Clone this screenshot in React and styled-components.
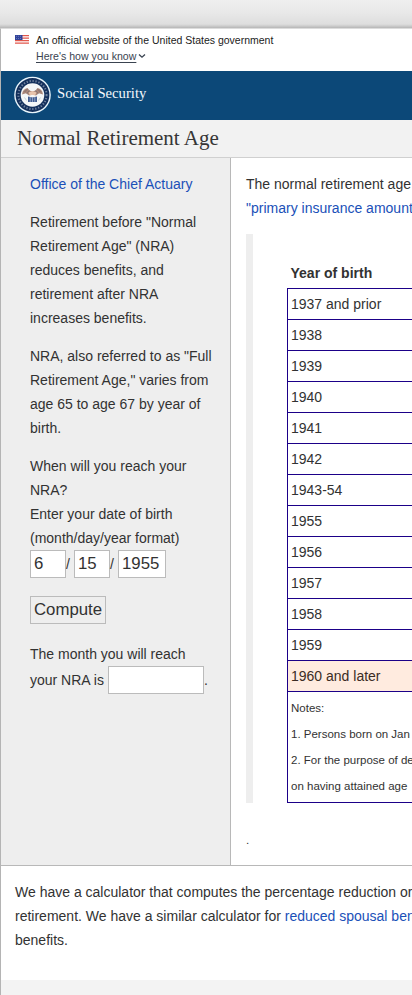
import React from 'react';
import styled, { createGlobalStyle } from 'styled-components';

const Global = createGlobalStyle`
  *, *::before, *::after { box-sizing: border-box; }
  html { overflow: hidden; }
  body {
    margin: 0;
    background: #dcdcdc;
    color: #323232;
    font: 14px/24px "Liberation Sans", Arial, sans-serif;
  }
`;

const Page = styled.div`
  width: 100%;
  height: 995px;
  padding-top: 28px;
  overflow: hidden;
  background: linear-gradient(#efefef 0, #e9e9e9 12px, #dedede 24px, #d6d6d6 25px, #b6b6b6 28px, #b6b6b6 100%);
`;

const Frame = styled.div`
  height: 967px;
  border-left: 1px solid #b4b4b4;
  border-top: 1px solid #dcdcdc;
  background: #fff;
  overflow: hidden;
`;

const GovBanner = styled.div`
  height: 42px;
  display: flex;
  gap: 7px;
  padding: 4px 0 0 14px;
  font-size: 10.5px;
  line-height: 15px;
  color: #1b1b1b;
  svg { display: block; }
`;

const FlagIcon = styled.svg`
  margin-top: 2px;
`;

const KnowLink = styled.a`
  display: flex;
  align-items: center;
  gap: 2px;
  color: #3a4350;
  font-size: 10.6px;
  line-height: 16px;
  span { text-decoration: underline; text-underline-offset: 1.5px; }
`;

const Masthead = styled.header`
  height: 49px;
  display: flex;
  align-items: center;
  gap: 6px;
  padding: 0 0 2px 13px;
  background: #0c4878;
  color: #f4f8fc;
  font: 14.7px/20px "Liberation Serif", "Times New Roman", serif;
`;

const SiteName = styled.span`
  padding-bottom: 3px;
`;

const TitleBar = styled.div`
  height: 38px;
  padding-left: 16px;
  background: #f2f2f2;
  border-bottom: 1px solid #d0d0d0;
`;

const Title = styled.h1`
  margin: 0;
  color: #363636;
  font: 400 21px/37px "Liberation Serif", "Times New Roman", serif;
`;

const Columns = styled.div`
  height: 708px;
  display: flex;
  border-bottom: 1px solid #b8b8b8;
`;

const Sidebar = styled.aside`
  width: 230px;
  flex: none;
  padding: 14px 14px 0 29px;
  background: #eee;
  border-right: 1px solid #b8b8b8;
`;

const Paragraph = styled.p`
  margin: 0 0 14px;
  white-space: nowrap;
`;

const Link = styled.a`
  color: #1a50b8;
`;

const DateRow = styled.div`
  display: flex;
  height: 28px;
  margin-top: -14px;
  line-height: 28px;
`;

const Field = styled.input`
  width: ${(p) => p.$width}px;
  height: 28px;
  padding: 0 3px;
  border: 1px solid #bbb;
  border-radius: 0;
  background: #fff;
  color: #323232;
  font: 16.8px "Liberation Sans", Arial, sans-serif;
  outline: none;
`;

const Slash = styled.span`
  width: 8px;
`;

const ComputeButton = styled.button`
  display: block;
  width: 76px;
  height: 28px;
  margin: 18px 0;
  padding: 0;
  border: 1px solid #bbb;
  background: #eee;
  color: #323232;
  font: 16.8px "Liberation Sans", Arial, sans-serif;
`;

const ResultRow = styled.div`
  display: flex;
  gap: 4px;
  line-height: 28px;
  white-space: nowrap;
`;

const ResultField = styled.span`
  display: flex;
`;

const Main = styled.main`
  flex: 1;
  min-width: 0;
  overflow: hidden;
  padding: 14px 0 0 15px;
`;

const TableQuote = styled.div`
  height: 569px;
  padding: 27px 0 0 34px;
  border-left: 7px solid #eee;
`;

const NraTable = styled.table`
  width: 600px;
  border-collapse: collapse;
  th {
    height: 27px;
    padding: 0 3px 3px;
    text-align: left;
    line-height: 24px;
  }
  td {
    border: 1px solid #1b0088;
    padding: 0 3px;
  }
`;

const YearCell = styled.td`
  height: 31px;
  background: ${(p) => (p.$marked ? '#ffebdf' : '#fff')};
  color: ${(p) => (p.$marked ? '#3b2c24' : 'inherit')};
`;

const NotesCell = styled.td`
  height: 111px;
  font-size: 11.5px;
  line-height: 26px;
  vertical-align: top;
  white-space: nowrap;
  && { padding-top: 3px; }
`;

const Dot = styled.div`
  margin-top: 25px;
  font-size: 11.5px;
`;

const Outro = styled.div`
  height: 114px;
  padding: 14px 0 0 14px;
  white-space: nowrap;
`;

const Footer = styled.footer`
  height: 20px;
  background: #f3f3f3;
`;

const years = ['1937 and prior', '1938', '1939', '1940', '1941', '1942', '1943-54', '1955', '1956', '1957', '1958', '1959', '1960 and later'];

function Flag() {
  return (
    <FlagIcon width="14" height="9" viewBox="0 0 14 9">
      <rect width="14" height="9" fill="#fff" />
      <path d="M0 .6h14M0 3.1h14M0 5.6h14M0 8.2h14" stroke="#e2574c" strokeWidth="1.3" />
      <rect width="7.5" height="5" fill="#31439a" />
      <path d="M1 1.3h5.5M1 3.5h5.5" stroke="#8d9bd0" strokeWidth=".6" strokeDasharray="1 1" />
    </FlagIcon>
  );
}

function Seal() {
  return (
    <svg width="37" height="38" viewBox="0 0 37 38">
      <circle cx="18.5" cy="19" r="18.3" fill="#e9f5fc" />
      <circle cx="18.5" cy="19" r="16.9" fill="#14305c" />
      <circle cx="18.5" cy="19" r="14.1" fill="none" stroke="#71839f" strokeWidth="2" strokeDasharray="1.3 1.7" />
      <circle cx="18.5" cy="19" r="11.8" fill="#f5f7f8" />
      <path d="M8 18.5c.5-4 2.500-6 5.500-6.500l2 2.500 3 1 3-1 2-2.500c3 .5 5 2.500 5.500 6.500l-4-1.200-3 2.200-3.500-1.200-3.500 1.200-3-2.200z" fill="#a98678" />
      <path d="M10.500 16l3-3M13 17.500l2.500-3M26.500 16l-3-3M24 17.500l-2.500-3" stroke="#6d6670" strokeWidth=".7" />
      <path d="M14.500 16.500l4-1.500 4 1.500-1.500 3-2.500-.7-2.500.7z" fill="#e8c4ac" />
      <path d="M14 20.500l4.500 1 4.500-1v5.500h-9z" fill="#405b91" />
      <path d="M16.200 21v5M18.500 21.500v4.500M20.800 21v5" stroke="#c5d1e2" strokeWidth=".6" />
      <path d="M10.500 21.500l2 3M26.500 21.500l-2 3" stroke="#c4d3db" strokeWidth="1" />
    </svg>
  );
}

function Chevron() {
  return (
    <svg width="8" height="6" viewBox="0 0 8 6" fill="none" stroke="#3a4350" strokeWidth="1.3">
      <path d="M1 1.4L4 4.2L7 1.4" />
    </svg>
  );
}

export default function App() {
  return (
    <>
      <Global />
      <Page>
        <Frame>
          <GovBanner>
            <Flag />
            <div>
              <div>An official website of the United States government</div>
              <KnowLink><span>Here's how you know</span><Chevron /></KnowLink>
            </div>
          </GovBanner>
          <Masthead><Seal /><SiteName>Social Security</SiteName></Masthead>
          <TitleBar><Title>Normal Retirement Age</Title></TitleBar>
          <Columns>
            <Sidebar>
              <Paragraph><Link>Office of the Chief Actuary</Link></Paragraph>
              <Paragraph>
                Retirement before "Normal<br />Retirement Age" (NRA)<br />reduces benefits, and<br />retirement after NRA<br />increases benefits.
              </Paragraph>
              <Paragraph>
                NRA, also referred to as "Full<br />Retirement Age," varies from<br />age 65 to age 67 by year of<br />birth.
              </Paragraph>
              <Paragraph>
                When will you reach your<br />NRA?<br />Enter your date of birth<br />(month/day/year format)
              </Paragraph>
              <DateRow>
                <Field $width={36} defaultValue="6" /><Slash>/</Slash>
                <Field $width={36} defaultValue="15" /><Slash>/</Slash>
                <Field $width={48} defaultValue="1955" />
              </DateRow>
              <ComputeButton>Compute</ComputeButton>
              <div>The month you will reach</div>
              <ResultRow>
                your NRA is
                <ResultField><Field $width={96} readOnly value="" />.</ResultField>
              </ResultRow>
            </Sidebar>
            <Main>
              <Paragraph>
                The normal retirement age<br /><Link>"primary insurance amount</Link>
              </Paragraph>
              <TableQuote>
                <NraTable>
                  <thead><tr><th>Year of birth</th></tr></thead>
                  <tbody>
                    {years.map((year, i) => (
                      <tr key={year}><YearCell $marked={i === years.length - 1}>{year}</YearCell></tr>
                    ))}
                    <tr>
                      <NotesCell>
                        Notes:<br />1. Persons born on Jan<br />2. For the purpose of de<br />on having attained age
                      </NotesCell>
                    </tr>
                  </tbody>
                </NraTable>
              </TableQuote>
              <Dot>.</Dot>
            </Main>
          </Columns>
          <Outro>
            We have a calculator that computes the percentage reduction or<br />
            retirement. We have a similar calculator for <Link>reduced spousal ben</Link><br />
            benefits.
          </Outro>
          <Footer />
        </Frame>
      </Page>
    </>
  );
}
